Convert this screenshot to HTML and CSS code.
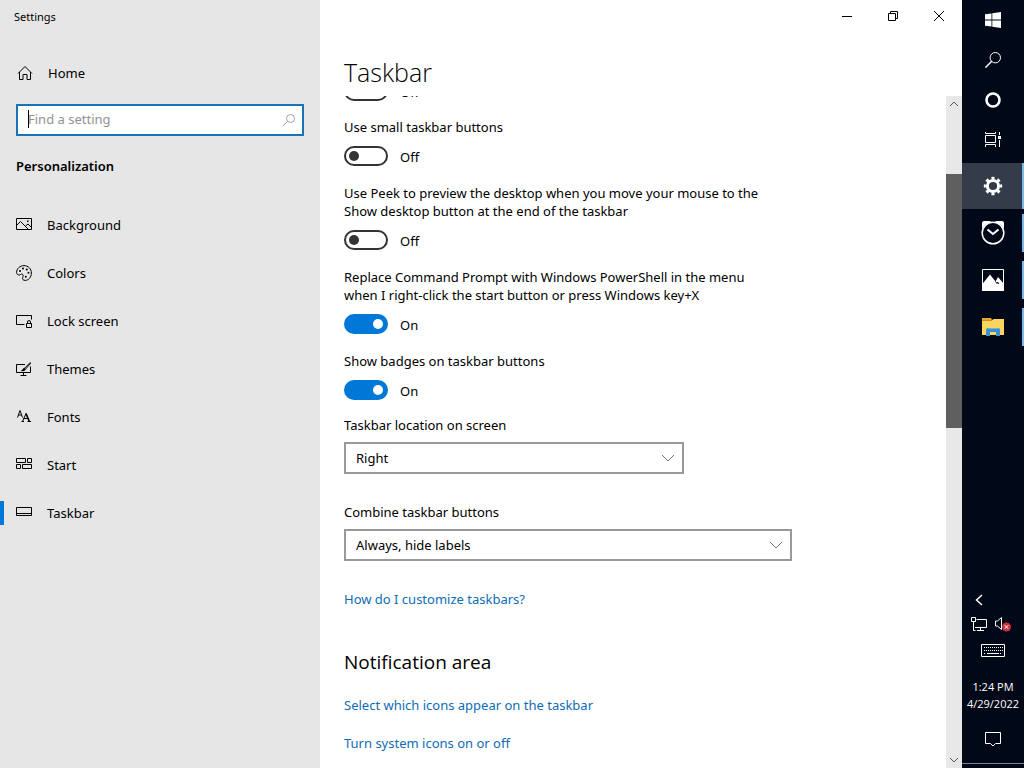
FILE: index.html
```
<!DOCTYPE html>
<html lang="en">
<head>
    <meta charset="UTF-8">
    <meta name="viewport" content="width=device-width, initial-scale=1.0">
    <title>Settings</title>
    <link rel="stylesheet" href="styles.css">
</head>
<body>
    <div class="desktop">
        <aside class="sidebar">
            <div class="window-title">Settings</div>

            <a class="nav-link home-link" href="#">
                <svg class="icon" viewBox="0 0 16 16"><path d="M1 8.500 8 1.500l7 7M2.500 7v7.500h3.500v-5h4v5h3.500V7"/></svg>
                <span>Home</span>
            </a>

            <div class="search-box">
                <input type="text" class="search-input" placeholder="Find a setting" aria-label="Find a setting">
                <span class="caret"></span>
                <svg class="search-icon" viewBox="0 0 14 14"><circle cx="8.500" cy="5.500" r="4"/><path d="M5.500 8.500 1 13"/></svg>
            </div>

            <h2 class="nav-heading">Personalization</h2>

            <nav class="nav">
                <a class="nav-link" href="#">
                    <svg class="icon" viewBox="0 0 16 16"><path d="M.5 1.500h15v11H.5zM.5 8.500l4-4 8 8M9.500 9l2.500-2 3.500 3.500"/><path class="solid" d="M11 3.500h1.500V5H11z"/></svg>
                    <span>Background</span>
                </a>
                <a class="nav-link" href="#">
                    <svg class="icon" viewBox="0 0 16 16"><path d="M8 .6c4.200 0 7.400 3.200 7.400 7.400 0 4.300-2.900 7.400-6.200 7.400-2.200 0-3-1.200-2.500-2.700.6-1.800.8-3.100-.6-3.600-1.100-.4-1.600.8-2.700.9C1.500 10.100.6 9 .6 7.500.6 3.500 4 .6 8 .6z"/><g class="solid"><circle cx="4" cy="6" r="1"/><circle cx="7" cy="3.600" r="1"/><circle cx="10.800" cy="4.500" r="1"/><circle cx="12.500" cy="7.800" r="1"/><circle cx="9.800" cy="11.800" r="1"/></g></svg>
                    <span>Colors</span>
                </a>
                <a class="nav-link" href="#">
                    <svg class="icon" viewBox="0 0 16 16"><path d="M8.500 11.500h-8v-9h15v4M10.500 10.500h5v4h-5zM11.500 10.500V9a1.500 1.500 0 0 1 3 0v1.500"/></svg>
                    <span>Lock screen</span>
                </a>
                <a class="nav-link" href="#">
                    <svg class="icon" viewBox="0 0 16 16"><path d="M9 3.500H.5v8h14v-6M7.500 11.500v2.500M4.500 14.500h6"/><path d="M14.500 1.200 8.300 7.500M14.800 2.200 9.200 8.500"/><path class="solid" d="M8.300 6.800 9.600 8c.2 1.800-1.800 2.600-4.800 2 1.500-.5 1.600-2.600 3.500-3.200z"/></svg>
                    <span>Themes</span>
                </a>
                <a class="nav-link" href="#">
                    <svg class="icon" viewBox="0 0 16 16"><path d="M1.500 8.500 4 1.500l2.500 7M2.500 6h3"/><path d="M6.500 12.500 10 4.500l3.500 8M7.500 9.500h4.500M5.500 12.500H8M11.500 12.500H15"/><path class="bold" d="m10 4.500 3.300 8"/></svg>
                    <span>Fonts</span>
                </a>
                <a class="nav-link" href="#">
                    <svg class="icon" viewBox="0 0 16 16"><path d="M.5 1.500h9v4h-9zM11.500 1.500h4v4h-4zM.5 7.500h4v4h-4zM6.500 7.500h9v4h-9z"/></svg>
                    <span>Start</span>
                </a>
                <a class="nav-link active" href="#" aria-current="page">
                    <svg class="icon" viewBox="0 0 16 16"><path d="M.5 2.500h15v8H.5zM.5 8.500h15"/></svg>
                    <span>Taskbar</span>
                </a>
            </nav>
        </aside>

        <main class="main">
            <div class="window-buttons">
                <button class="window-btn" aria-label="Minimize"><svg viewBox="0 0 10 10"><path d="M0 5.500h10"/></svg></button>
                <button class="window-btn" aria-label="Restore"><svg viewBox="0 0 10 10"><path d="M.5 2.500h7v7h-7zM2.500 2.500v-2h7v7h-2"/></svg></button>
                <button class="window-btn" aria-label="Close"><svg viewBox="0 0 10 10"><path d="m0 0 10 10M10 0 0 10"/></svg></button>
            </div>

            <h1 class="page-title">Taskbar</h1>

            <div class="scroll-area">
                <div class="content">
                    <div class="toggle-row first-row">
                        <input type="checkbox" class="toggle" id="autohide" aria-label="Automatically hide the taskbar">
                        <span>Off</span>
                    </div>

                    <div class="setting">
                        <label for="small">Use small taskbar buttons</label>
                        <div class="toggle-row">
                            <input type="checkbox" class="toggle" id="small">
                            <span>Off</span>
                        </div>
                    </div>

                    <div class="setting">
                        <label for="peek">Use Peek to preview the desktop when you move your mouse to the Show desktop button at the end of the taskbar</label>
                        <div class="toggle-row">
                            <input type="checkbox" class="toggle" id="peek">
                            <span>Off</span>
                        </div>
                    </div>

                    <div class="setting">
                        <label for="powershell">Replace Command Prompt with Windows PowerShell in the menu when I right-click the start button or press Windows key+X</label>
                        <div class="toggle-row">
                            <input type="checkbox" class="toggle" id="powershell" checked>
                            <span>On</span>
                        </div>
                    </div>

                    <div class="setting">
                        <label for="badges">Show badges on taskbar buttons</label>
                        <div class="toggle-row">
                            <input type="checkbox" class="toggle" id="badges" checked>
                            <span>On</span>
                        </div>
                    </div>

                    <div class="field">
                        <label for="location">Taskbar location on screen</label>
                        <div class="select-box narrow">
                            <select id="location">
                                <option>Left</option>
                                <option>Top</option>
                                <option selected>Right</option>
                                <option>Bottom</option>
                            </select>
                            <svg class="chevron" viewBox="0 0 12 8"><path d="m0 1 6 6 6-6"/></svg>
                        </div>
                    </div>

                    <div class="field">
                        <label for="combine">Combine taskbar buttons</label>
                        <div class="select-box">
                            <select id="combine">
                                <option selected>Always, hide labels</option>
                                <option>When taskbar is full</option>
                                <option>Never</option>
                            </select>
                            <svg class="chevron" viewBox="0 0 12 8"><path d="m0 1 6 6 6-6"/></svg>
                        </div>
                    </div>

                    <a class="link" href="#">How do I customize taskbars?</a>

                    <h2 class="section-title">Notification area</h2>
                    <div class="link-list">
                        <a class="link" href="#">Select which icons appear on the taskbar</a>
                        <a class="link" href="#">Turn system icons on or off</a>
                    </div>
                </div>

                <div class="scrollbar">
                    <button class="scroll-btn" aria-label="Scroll up"><svg viewBox="0 0 10 6"><path d="m1 5 4-4 4 4"/></svg></button>
                    <div class="scroll-track">
                        <div class="scroll-thumb"></div>
                    </div>
                    <button class="scroll-btn" aria-label="Scroll down"><svg viewBox="0 0 10 6"><path d="m1 1 4 4 4-4"/></svg></button>
                </div>
            </div>
        </main>

        <div class="taskbar">
            <div class="system-buttons">
                <button class="task-btn" aria-label="Start">
                    <svg class="icon" viewBox="0 0 16 16"><path class="solid" d="M0 2.300 6.500 1.400v6.100H0zM7.300 1.300 16 0v7.500H7.300zM0 8.400h6.500v6.200L0 13.700zM7.300 8.400H16V16l-8.700-1.300z"/></svg>
                </button>
                <button class="task-btn" aria-label="Search">
                    <svg class="icon" viewBox="0 0 16 16"><circle cx="10.300" cy="5.700" r="5.200"/><path class="bold" d="M6.700 9.300.4 15.600"/></svg>
                </button>
                <button class="task-btn" aria-label="Cortana">
                    <svg class="icon" viewBox="0 0 16 16"><circle class="ring" cx="8" cy="8" r="6.500"/></svg>
                </button>
                <button class="task-btn" aria-label="Task view">
                    <svg class="icon" viewBox="0 0 16 16"><path d="M.5 3.500h10v7H.5zM.5 0v1.500h10V0M.5 15v-2.500h10V15M14.500 0v3M14.500 8v7"/><path class="solid" d="M13 4h3v3h-3z"/></svg>
                </button>
            </div>

            <div class="app-buttons">
                <button class="app-btn current" aria-label="Settings">
                    <svg class="icon-lg" viewBox="0 0 24 24"><circle class="gear-ring" cx="12" cy="12" r="5.600"/><circle class="gear-teeth" cx="12" cy="12" r="7.900" pathLength="80"/></svg>
                </button>
                <button class="app-btn" aria-label="Alarms &amp; Clock">
                    <svg class="icon-lg" viewBox="0 0 24 24"><path class="solid" d="M1 8V2q0-2 2-2h6l1 1Q3 3 1 8zM23 8V2q0-2-2-2h-6l-1 1q7 2 9 7z"/><circle class="bold" cx="12" cy="12" r="10.800"/><path class="thick" d="m6.500 8.500 5.500 4.500 5.500-4.500"/></svg>
                </button>
                <button class="app-btn" aria-label="Photos">
                    <svg class="icon-lg" viewBox="0 0 24 24"><path d="M1.500 1.500h21v21h-21z"/><path class="solid" d="M1 16.500 9 6.500l5.500 7 2.500-4.500 6 7V23H1z"/><path class="cut" d="m14.500 13.500 1.500 2 .5-1.500 1.500 2"/></svg>
                </button>
                <button class="app-btn" aria-label="File Explorer">
                    <svg class="icon-lg" viewBox="0 0 24 24"><path class="folder-back" d="M1 3h9l1 2H1z"/><path class="folder" d="M1 5h10l2-1h10v16H1z"/><path class="folder-fold" d="M1 5h10v1H1z"/><path class="folder-base" d="M5 21v-6q0-2 2-2h10q2 0 2 2v6h-4v-4H9v4z"/><path class="folder-top" d="M7 13h10v1H7z"/></svg>
                </button>
            </div>

            <div class="tray">
                <button class="tray-more" aria-label="Show hidden icons">
                    <svg viewBox="0 0 8 12"><path d="M7 1 1.500 6 7 11"/></svg>
                </button>
                <div class="tray-icons">
                    <svg class="icon" viewBox="0 0 16 16"><path d="M5.500 3.500h10v8H4M9.500 11.500v2.500M6 14.500h7M.5 1.500h4v4h-4zM2.500 5.500v9h2"/></svg>
                    <svg class="icon" viewBox="0 0 16 16"><path d="M.5 5v5h2l4 3.500v-12L2.500 5z"/><circle class="mute" cx="11.500" cy="11" r="4.500"/><path d="m9.700 9.200 3.600 3.600m0-3.600-3.600 3.600"/></svg>
                </div>
                <svg class="keyboard" viewBox="0 0 24 14"><path d="M.5.5h23v12H.5z"/><path class="dots" d="M3 3.500h19M3 6.500h19M3 9.500h2m14 0h2"/><path d="M6 9.500h12"/></svg>
                <div class="clock">
                    <div>1:24 PM</div>
                    <div>4/29/2022</div>
                </div>
                <button class="action-center" aria-label="Notifications">
                    <svg class="icon" viewBox="0 0 16 16"><path d="M.5 1.500h15v11h-5L8 15l-2.500-2.500h-5z"/></svg>
                </button>
                <div class="show-desktop"></div>
            </div>
        </div>
    </div>
</body>
</html>
```
FILE: styles.css
```
* {
    margin: 0;
    padding: 0;
    box-sizing: border-box;
}

body {
    font-family: "Noto Sans", "Open Sans", sans-serif;
    font-size: 13px;
    line-height: 18px;
    color: #000;
    background: white;
}

button {
    background: none;
    border: none;
    color: inherit;
    font: inherit;
    display: flex;
    align-items: center;
    justify-content: center;
}

a {
    text-decoration: none;
    color: inherit;
}

svg {
    display: block;
    flex: none;
    fill: none;
    stroke: currentColor;
    stroke-width: 1;
}

.icon {
    width: 16px;
    height: 16px;
}

.icon-lg {
    width: 24px;
    height: 24px;
}

.solid {
    fill: currentColor;
    stroke: none;
}

.bold {
    stroke-width: 1.5;
}

.thick {
    stroke-width: 2;
}

.ring {
    stroke-width: 2.6;
}

.desktop {
    display: flex;
    height: 100vh;
    overflow: hidden;
}

/* Sidebar */
.sidebar {
    width: 320px;
    flex: none;
    background: #e6e6e6;
}

.window-title {
    height: 34px;
    padding-left: 14px;
    font-size: 11px;
    line-height: 34px;
}

.nav-link {
    display: flex;
    align-items: center;
    gap: 15px;
    height: 48px;
    padding-left: 16px;
}

.home-link {
    margin-top: 15px;
    padding-left: 17px;
}

.search-box {
    position: relative;
    margin: 7px 16px 0;
}

.search-input {
    display: block;
    width: 100%;
    height: 32px;
    padding: 0 32px 2px 10px;
    border: 2px solid #1874b8;
    background: white;
    font: inherit;
    outline: none;
}

.search-input::placeholder {
    color: #929292;
}

.caret {
    position: absolute;
    left: 12px;
    top: 6px;
    width: 1px;
    height: 18px;
    background: #000;
}

.search-icon {
    position: absolute;
    right: 8px;
    top: 9px;
    width: 14px;
    height: 14px;
    color: #a0a0a0;
}

.nav-heading {
    margin: 21px 16px 26px;
    font-size: 13px;
    font-weight: 600;
}

.nav-link.active {
    background: linear-gradient(#0078d7, #0078d7) left center / 4px 24px no-repeat;
}

/* Main pane */
.main {
    flex: 1;
    min-width: 0;
    display: flex;
    flex-direction: column;
}

.window-buttons {
    display: flex;
    justify-content: flex-end;
}

.window-btn {
    width: 46px;
    height: 32px;
}

.window-btn svg {
    width: 10px;
    height: 10px;
}

.page-title {
    padding: 20px 24px 4px;
    font-family: "Open Sans", sans-serif;
    font-size: 25px;
    font-weight: 300;
    line-height: 40px;
}

.scroll-area {
    flex: 1;
    min-height: 0;
    display: flex;
}

.content {
    flex: 1;
    padding-left: 24px;
    overflow: hidden;
}

.toggle-row {
    display: flex;
    align-items: center;
    gap: 12px;
    height: 20px;
}

.toggle-row span {
    padding-top: 2px;
}

/* scrolled partly out of view */
.first-row {
    margin: -15px 0 -1px;
}

.setting {
    max-width: 430px;
    margin-top: 18px;
}

.setting label {
    display: block;
    margin-bottom: 10px;
}

.toggle {
    appearance: none;
    display: flex;
    align-items: center;
    width: 44px;
    height: 20px;
    padding: 0 3px;
    border: 2px solid #333;
    border-radius: 10px;
}

.toggle::before {
    content: "";
    width: 10px;
    height: 10px;
    border-radius: 50%;
    background: #333;
}

.toggle:checked {
    justify-content: flex-end;
    background: #0078d7;
    border-color: #0078d7;
}

.toggle:checked::before {
    background: white;
}

.field {
    max-width: 448px;
    margin: 16px 0 29px;
}

.field + .field {
    margin-top: 0;
}

.field label {
    display: block;
    margin-bottom: 8px;
}

.select-box {
    position: relative;
}

.select-box.narrow {
    max-width: 340px;
}

.select-box select {
    appearance: none;
    display: block;
    width: 100%;
    height: 32px;
    padding: 0 32px 0 10px;
    border: 2px solid #999;
    background: white;
    color: #000;
    font: inherit;
}

.chevron {
    position: absolute;
    right: 10px;
    top: 12px;
    width: 12px;
    height: 8px;
    color: #777;
    pointer-events: none;
}

.link {
    display: block;
    width: fit-content;
    color: #0f6cb5;
}

.section-title {
    margin: 40px 0 20px;
    font-family: "Open Sans", sans-serif;
    font-size: 19px;
    font-weight: 400;
    line-height: 28px;
}

.link-list {
    display: flex;
    flex-direction: column;
    gap: 20px;
}

.scrollbar {
    width: 16px;
    flex: none;
    display: flex;
    flex-direction: column;
    background: #e8e8e8;
}

.scroll-btn {
    height: 16px;
    color: #555;
}

.scroll-btn svg {
    width: 10px;
    height: 6px;
}

.scroll-track {
    flex: 1;
    padding-top: 62px;
}

.scroll-thumb {
    height: 44%;
    background: #5f5f5f;
}

/* Taskbar */
.taskbar {
    width: 62px;
    flex: none;
    display: flex;
    flex-direction: column;
    background: #010817;
    color: #fff;
}

.task-btn {
    width: 100%;
    height: 40px;
}

.app-buttons {
    display: flex;
    flex-direction: column;
    gap: 1px;
    margin-top: 3px;
}

.app-btn {
    width: 100%;
    height: 46px;
    background: linear-gradient(#76b9ed, #76b9ed) right center / 2px 38px no-repeat;
}

.app-btn.current {
    background: linear-gradient(#76b9ed, #76b9ed) right center / 2px 100% no-repeat #343b49;
}

.gear-ring {
    stroke-width: 3;
}

/* eight teeth, the first one centred on the axis */
.gear-teeth {
    stroke-width: 2.6;
    stroke-dasharray: 5 5;
    stroke-dashoffset: 2.5;
}

.cut {
    stroke: #010817;
}

.folder {
    fill: #fbd45f;
    stroke: none;
}

.folder-back {
    fill: #e8a92c;
    stroke: none;
}

.folder-fold {
    fill: #c98d1c;
    stroke: none;
}

.folder-base {
    fill: #3a8fd0;
    stroke: none;
}

.folder-top {
    fill: #6bb5e8;
    stroke: none;
}

.tray {
    display: flex;
    flex-direction: column;
    align-items: center;
    margin-top: auto;
}

.tray-more {
    align-self: flex-start;
    width: 34px;
    height: 24px;
}

.tray-more svg {
    width: 8px;
    height: 12px;
    stroke-width: 1.5;
}

.tray-icons {
    display: flex;
    align-items: center;
    gap: 8px;
    height: 24px;
    padding-right: 4px;
}

.mute {
    fill: #c8303c;
    stroke: none;
}

.keyboard {
    width: 24px;
    height: 14px;
    margin: 8px 0 20px;
}

.dots {
    stroke-dasharray: 1 1;
}

.clock {
    font-family: "Open Sans", sans-serif;
    font-size: 11px;
    line-height: 17px;
    text-align: center;
}

.action-center {
    width: 100%;
    height: 38px;
    margin: 8px 0 5px;
}

.show-desktop {
    align-self: stretch;
    height: 5px;
    border-top: 1px solid #7a808c;
}
```
